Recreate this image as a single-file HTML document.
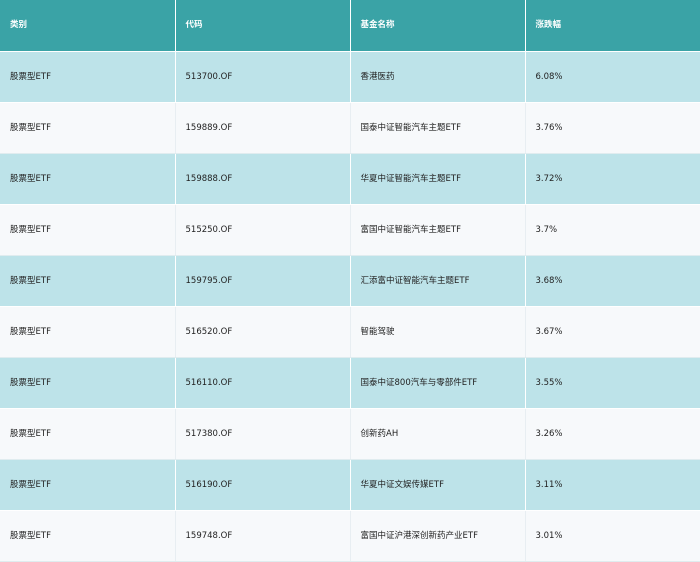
<!DOCTYPE html><html><head><meta charset="utf-8"><style>
body{margin:0;width:700px;height:560px;overflow:hidden;background:#f7f9fb;font-family:"DejaVu Sans","Noto Sans CJK SC",sans-serif;font-size:8.5px;line-height:12px;color:#222}
table{border-collapse:collapse;width:700px;table-layout:fixed}
td{height:51px;padding:0 0 0 10px;border-right:1px solid #fff;border-bottom:1px solid #fff;box-sizing:border-box;vertical-align:middle}
td span{display:inline-block;vertical-align:middle}
tr.h td{background:#3aa3a6;color:#fff;font-weight:bold;height:51px}
tr.o td{background:#bde3e9}
tr.e td{background:#f7f9fb;border-right-color:#e8eef2;border-bottom-color:#e0ecef}
td:last-child{border-right:none}
</style></head><body><table>
<tr class="h"><td>类别</td><td>代码</td><td>基金名称</td><td>涨跌幅</td></tr>
<tr class="o"><td>股票型ETF</td><td>513700.OF</td><td>香港医药</td><td>6.08%</td></tr>
<tr class="e"><td>股票型ETF</td><td>159889.OF</td><td>国泰中证智能汽车主题ETF</td><td>3.76%</td></tr>
<tr class="o"><td>股票型ETF</td><td>159888.OF</td><td>华夏中证智能汽车主题ETF</td><td>3.72%</td></tr>
<tr class="e"><td>股票型ETF</td><td>515250.OF</td><td>富国中证智能汽车主题ETF</td><td>3.7%</td></tr>
<tr class="o"><td>股票型ETF</td><td>159795.OF</td><td>汇添富中证智能汽车主题ETF</td><td>3.68%</td></tr>
<tr class="e"><td>股票型ETF</td><td>516520.OF</td><td>智能驾驶</td><td>3.67%</td></tr>
<tr class="o"><td>股票型ETF</td><td>516110.OF</td><td>国泰中证800汽车与零部件ETF</td><td>3.55%</td></tr>
<tr class="e"><td>股票型ETF</td><td>517380.OF</td><td>创新药AH</td><td>3.26%</td></tr>
<tr class="o"><td>股票型ETF</td><td>516190.OF</td><td>华夏中证文娱传媒ETF</td><td>3.11%</td></tr>
<tr class="e"><td>股票型ETF</td><td>159748.OF</td><td>富国中证沪港深创新药产业ETF</td><td>3.01%</td></tr>
</table></body></html>
